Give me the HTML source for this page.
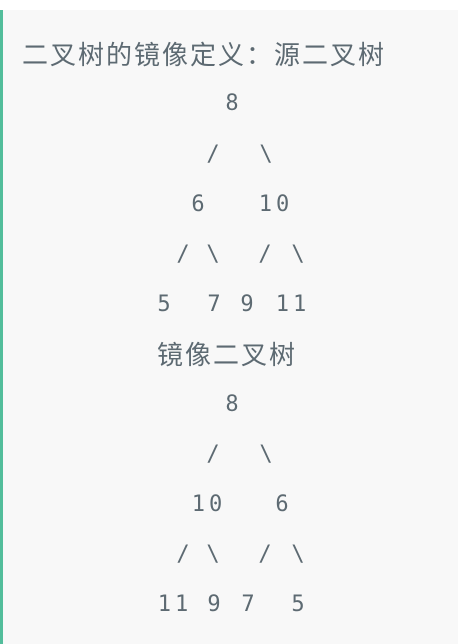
<!DOCTYPE html><html><head><meta charset="utf-8"><style>
html,body{margin:0;padding:0;width:458px;height:644px;background:#fff;overflow:hidden}
.box{position:absolute;left:0;top:10px;width:458px;height:634px;background:#f8f8f8;border-left:3px solid #52bd9b;box-sizing:border-box}
.t{position:absolute;transform:translate(-50%,-50%);color:#5d6a72;font-family:"DejaVu Sans Mono","Liberation Mono",monospace;font-size:22px;white-space:pre;line-height:1}
.d{letter-spacing:4px;text-indent:4px}
.c{font-family:"Liberation Sans","Noto Sans CJK SC",sans-serif;font-size:26px;letter-spacing:2px;transform:translate(0,-50%)}
</style></head><body><div class="box"></div>
<div class="t c" style="left:22px;top:55px">二叉树的镜像定义：源二叉树</div>
<div class="t" style="left:232px;top:104px">8</div>
<div class="t" style="left:213px;top:155px">/</div><div class="t" style="left:266px;top:155px">\</div>
<div class="t" style="left:198px;top:205px">6</div><div class="t d" style="left:274px;top:205px">10</div>
<div class="t" style="left:183px;top:255px">/</div><div class="t" style="left:213px;top:255px">\</div><div class="t" style="left:265px;top:255px">/</div><div class="t" style="left:298px;top:255px">\</div>
<div class="t" style="left:164px;top:305px">5</div><div class="t" style="left:214px;top:305px">7</div><div class="t" style="left:247px;top:305px">9</div><div class="t d" style="left:291px;top:305px">11</div>
<div class="t c" style="left:157px;top:355px">镜像二叉树</div>
<div class="t" style="left:232px;top:405px">8</div>
<div class="t" style="left:213px;top:455px">/</div><div class="t" style="left:266px;top:455px">\</div>
<div class="t d" style="left:207px;top:505px">10</div><div class="t" style="left:282px;top:505px">6</div>
<div class="t" style="left:183px;top:555px">/</div><div class="t" style="left:213px;top:555px">\</div><div class="t" style="left:265px;top:555px">/</div><div class="t" style="left:298px;top:555px">\</div>
<div class="t d" style="left:173px;top:605px">11</div><div class="t" style="left:214px;top:605px">9</div><div class="t" style="left:248px;top:605px">7</div><div class="t" style="left:298px;top:605px">5</div>
</body></html>
